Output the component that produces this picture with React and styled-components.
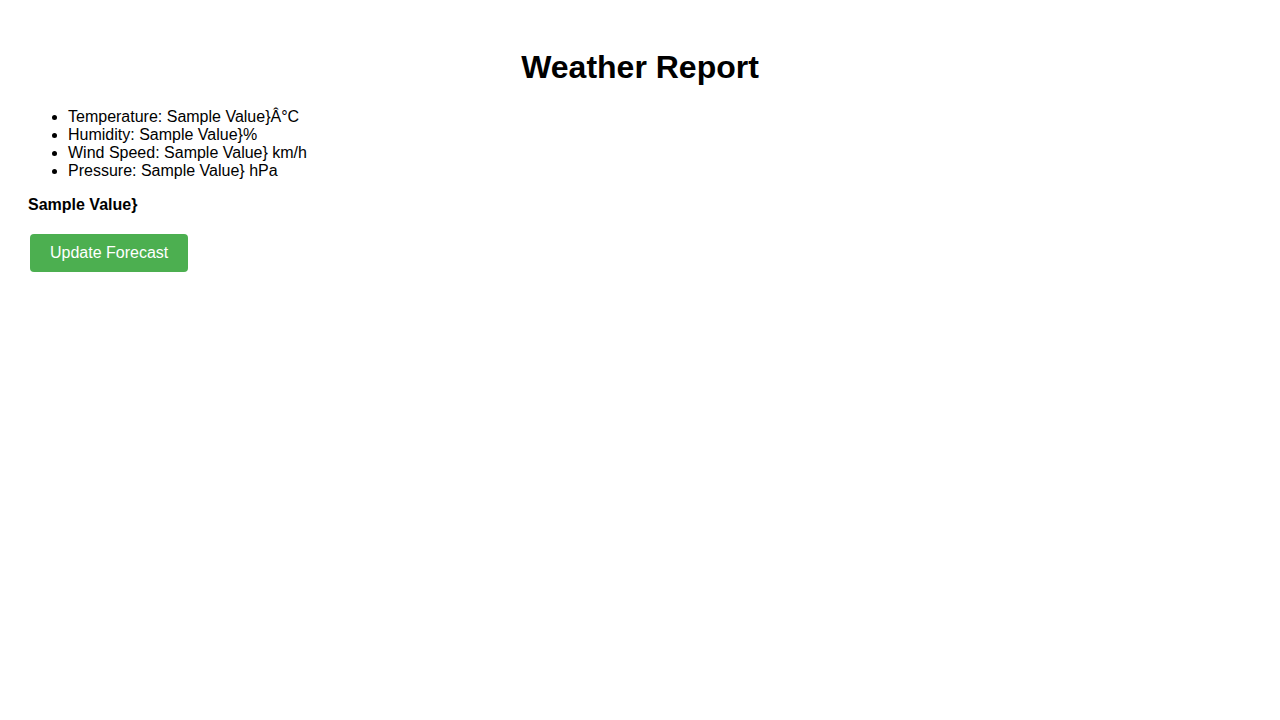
import React from "react";
import styled, { createGlobalStyle } from "styled-components";

const GlobalStyle = createGlobalStyle`
  body {
    margin: 8px;
    font-family: "Liberation Sans", Arial, sans-serif;
    background: #ffffff;
    color: #000000;
  }
`;

const Container = styled.div`
  padding: 20px;
`;

const Title = styled.h1`
  text-align: center;
  font-size: 32px;
  font-weight: bold;
  margin: 21.44px 0;
`;

const List = styled.ul`
  margin: 16px 0;
  padding-left: 40px;
  font-size: 16px;
  line-height: 18px;
`;

const Item = styled.li``;

const Summary = styled.p`
  margin: 16px 0;
  font-size: 16px;
  font-weight: bold;
  line-height: 18px;
`;

const Button = styled.button`
  margin: 4.5px 2px 0;
  padding: 10px 20px;
  background: #4caf50;
  color: #ffffff;
  border: none;
  border-radius: 4px;
  font-family: "Liberation Sans", Arial, sans-serif;
  font-size: 16px;
  line-height: 18px;
  cursor: pointer;
`;

const items = [
  "Temperature: Sample Value}Â°C",
  "Humidity: Sample Value}%",
  "Wind Speed: Sample Value} km/h",
  "Pressure: Sample Value} hPa",
];

export default function App() {
  return (
    <>
      <GlobalStyle />
      <Container>
        <Title>Weather Report</Title>
        <List>
          {items.map((t) => (
            <Item key={t}>{t}</Item>
          ))}
        </List>
        <Summary>Sample Value}</Summary>
        <Button>Update Forecast</Button>
      </Container>
    </>
  );
}
